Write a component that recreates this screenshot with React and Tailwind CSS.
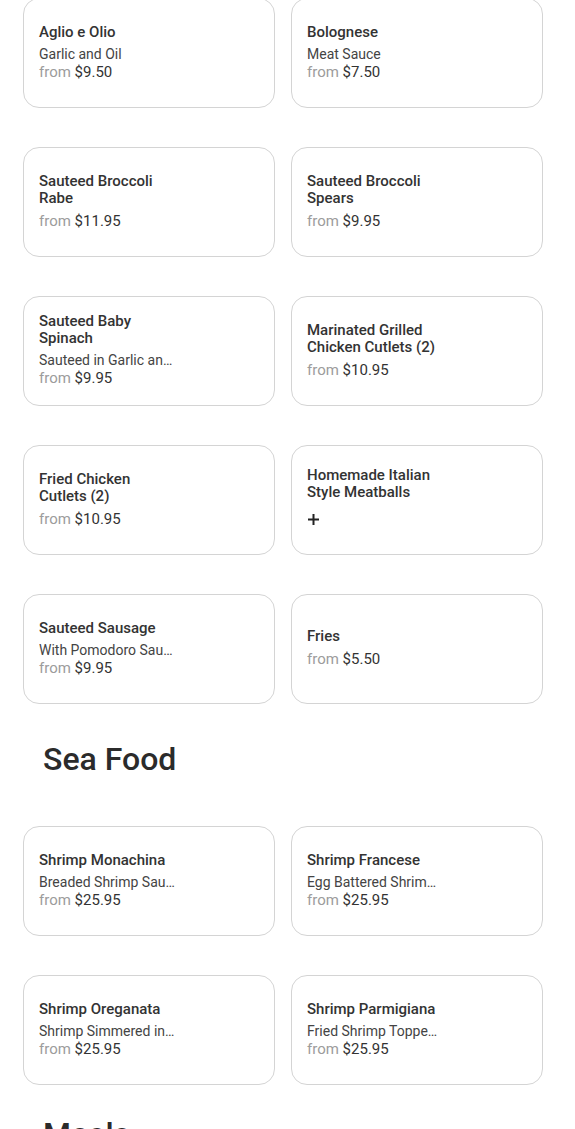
// Menu data, grouped by section
const sides = [
  { name: "Aglio e Olio", desc: "Garlic and Oil", price: "$9.50" },
  { name: "Bolognese", desc: "Meat Sauce", price: "$7.50" },
  { name: "Sauteed Broccoli Rabe", price: "$11.95" },
  { name: "Sauteed Broccoli Spears", price: "$9.95" },
  { name: "Sauteed Baby Spinach", desc: "Sauteed in Garlic and Oil", price: "$9.95" },
  { name: "Marinated Grilled Chicken Cutlets (2)", price: "$10.95" },
  { name: "Fried Chicken Cutlets (2)", price: "$10.95" },
  { name: "Homemade Italian Style Meatballs", add: true },
  { name: "Sauteed Sausage", desc: "With Pomodoro Sauce", price: "$9.95" },
  { name: "Fries", price: "$5.50" },
];

const seafood = [
  { name: "Shrimp Monachina", desc: "Breaded Shrimp Sauteed with Mushrooms", price: "$25.95" },
  { name: "Shrimp Francese", desc: "Egg Battered Shrimp in Lemon Sauce", price: "$25.95" },
  { name: "Shrimp Oreganata", desc: "Shrimp Simmered in Garlic and Wine", price: "$25.95" },
  { name: "Shrimp Parmigiana", desc: "Fried Shrimp Topped with Mozzarella", price: "$25.95" },
];

const PlusIcon = () => (
  <svg width="11" height="11" viewBox="0 0 11 11" fill="#222">
    <rect x="4.5" y="0" width="2" height="11" />
    <rect x="0" y="4.5" width="11" height="2" />
  </svg>
);

const ItemCard = ({ item }) => (
  <div className="h-[110px] rounded-[16px] border border-[#d4d4d4] bg-white px-[15px] flex items-center">
    <div className="w-[140px] flex flex-col -mt-[2px]">
      <h3 className="text-[15px] leading-[17px] font-medium text-[#333]">
        {item.name}
      </h3>
      {item.desc && (
        <p className="mt-[4px] w-[136px] text-[14px] leading-[18px] text-[#444] truncate">
          {item.desc}
        </p>
      )}
      {item.price && (
        <p
          className={`text-[15px] leading-[18px] ${
            item.desc ? "" : "mt-[5px]"
          }`}
        >
          <span className="text-[#9c9c9c]">from</span>{" "}
          <span className="text-[#333]">{item.price}</span>
        </p>
      )}
      {item.add && (
        <div className="mt-[13px] ml-[1px] h-[17px]">
          <PlusIcon />
        </div>
      )}
    </div>
  </div>
);

const Section = ({ title, items }) => (
  <div>
    {title && (
      <h2 className="pl-[20px] pt-[35px] pb-[47px] text-[32px] leading-[40px] font-medium text-[#2b2b2b]">
        {title}
      </h2>
    )}
    <div className="grid grid-cols-[252px_252px] gap-x-[16px] gap-y-[39px]">
      {items.map((item, i) => (
        <ItemCard key={i} item={item} />
      ))}
    </div>
  </div>
);

export default function App() {
  return (
    <div
      className="min-h-screen bg-white pl-[23px] -mt-[2px] overflow-hidden"
      style={{ fontFamily: "Roboto, 'Liberation Sans', sans-serif" }}
    >
      <Section items={sides} />
      <Section title="Sea Food" items={seafood} />
      <h2 className="pl-[20px] pt-[29px] text-[32px] leading-[40px] font-medium text-[#2b2b2b]">
        Meals
      </h2>
    </div>
  );
}
